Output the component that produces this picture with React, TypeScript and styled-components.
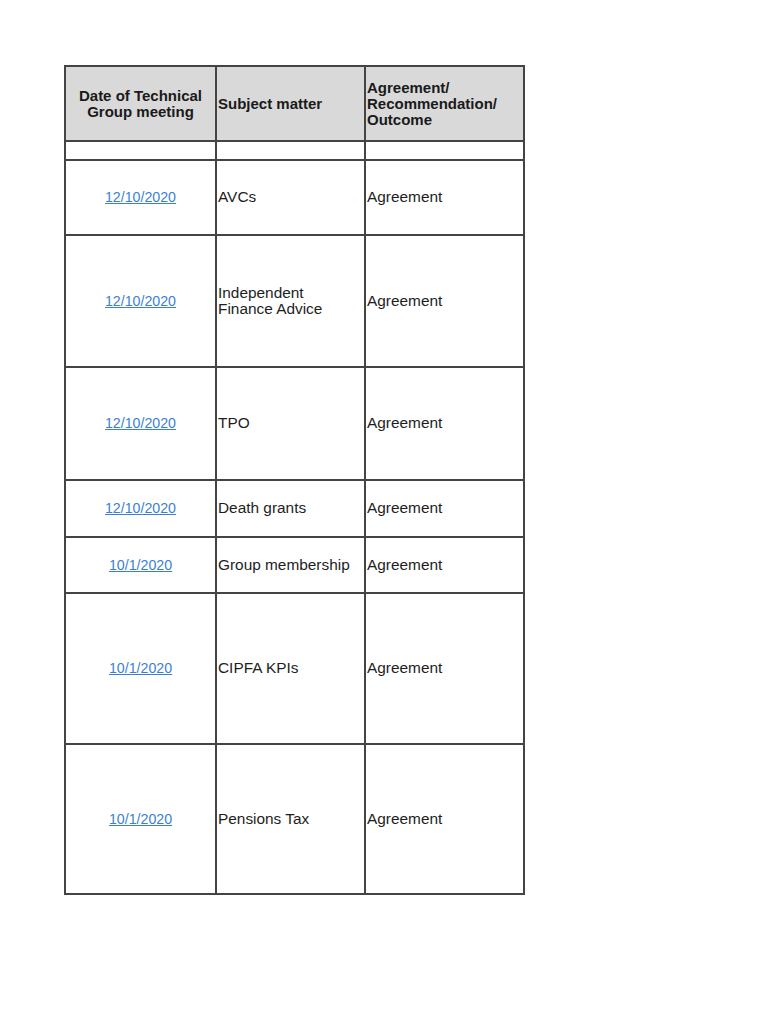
import React, { FC } from 'react'
import styled, { createGlobalStyle } from 'styled-components'

const GlobalStyle = createGlobalStyle`
  html, body {
    margin: 0;
    padding: 0;
    background: #ffffff;
  }
  body {
    font-family: 'Liberation Sans', Arial, sans-serif;
    color: #1e1e1e;
  }
`

interface IRow {
  date: string
  subject: string
  outcome: string
  height: number
}

const rows: IRow[] = [
  { date: '12/10/2020', subject: 'AVCs', outcome: 'Agreement', height: 75 },
  { date: '12/10/2020', subject: 'Independent Finance Advice', outcome: 'Agreement', height: 132 },
  { date: '12/10/2020', subject: 'TPO', outcome: 'Agreement', height: 113 },
  { date: '12/10/2020', subject: 'Death grants', outcome: 'Agreement', height: 57 },
  { date: '10/1/2020', subject: 'Group membership', outcome: 'Agreement', height: 56 },
  { date: '10/1/2020', subject: 'CIPFA KPIs', outcome: 'Agreement', height: 151 },
  { date: '10/1/2020', subject: 'Pensions Tax', outcome: 'Agreement', height: 150 },
]

const App: FC = () => {
  return (
    <>
      <GlobalStyle />
      <Page>
        <Sheet>
          <colgroup>
            <col style={{ width: 151 }} />
            <col style={{ width: 149 }} />
            <col style={{ width: 159 }} />
          </colgroup>
          <thead>
            <Row $height={75}>
              <HeadCell $align='center'>
                Date of Technical
                <br />
                Group meeting
              </HeadCell>
              <HeadCell>Subject matter</HeadCell>
              <HeadCell>
                Agreement/
                <br />
                Recommendation/
                <br />
                Outcome
              </HeadCell>
            </Row>
          </thead>
          <tbody>
            <Row $height={19}>
              <Cell />
              <Cell />
              <Cell />
            </Row>
            {rows.map((row, i) => (
              <Row key={i} $height={row.height}>
                <Cell $align='center'>
                  <DateLink href='#'>{row.date}</DateLink>
                </Cell>
                <Cell $padRight={8}>{row.subject}</Cell>
                <Cell>{row.outcome}</Cell>
              </Row>
            ))}
          </tbody>
        </Sheet>
      </Page>
    </>
  )
}

const Page = styled.div`
  padding: 65px 0 0 64px;
  min-height: 1024px;
  box-sizing: border-box;
`

const Sheet = styled.table`
  border-collapse: collapse;
  table-layout: fixed;
  width: 460px;
`

const Row = styled.tr<{ $height: number }>`
  height: ${({ $height }) => $height}px;
`

const HeadCell = styled.th<{ $align?: string }>`
  background: #d9d9d9;
  border: 2px solid #444444;
  font-size: 15px;
  font-weight: bold;
  line-height: 16px;
  text-align: ${({ $align }) => $align || 'left'};
  vertical-align: middle;
  padding: 0 1px;
  color: #1a1a1a;
`

const Cell = styled.td<{ $align?: string; $padRight?: number }>`
  border: 2px solid #444444;
  font-size: 15.4px;
  line-height: 16.5px;
  text-align: ${({ $align }) => $align || 'left'};
  vertical-align: middle;
  padding: 0 ${({ $padRight }) => $padRight ?? 1}px 0 1px;
`

const DateLink = styled.a`
  color: #3b7fd4;
  font-size: 14.2px;
  text-decoration: underline;
`

export default App
